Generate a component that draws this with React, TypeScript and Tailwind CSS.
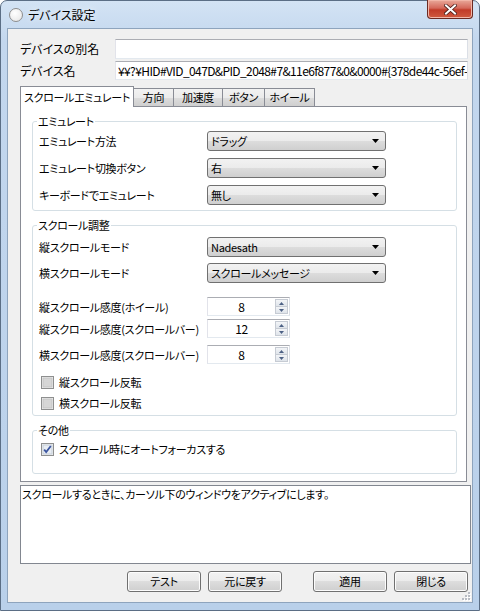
import React from "react";

const jp = "font-['Noto_Sans_CJK_JP','Liberation_Sans',sans-serif] [font-feature-settings:'palt']";

function ComboBox({ value }: { value: string }) {
  return (
    <div className="flex h-[20px] w-[179px] items-center justify-between rounded-[3px] border border-[#707070] bg-[linear-gradient(#f2f2f2,#ebebeb_50%,#dddddd_50%,#cfcfcf)] pl-[3px] pr-[6px] text-[11px] leading-none text-black">
      <span>{value}</span>
      <svg width="7" height="4" viewBox="0 0 7 4">
        <path d="M0 0h7L3.5 4z" fill="#000" />
      </svg>
    </div>
  );
}

function Spinner({ value }: { value: string }) {
  return (
    <div className="flex h-[19px] w-[83px] border border-t-[#abadb3] border-r-[#dbdfe6] border-b-[#e3e9ef] border-l-[#e2e3ea] bg-white">
      <div className="flex flex-1 items-center justify-center text-[12px] leading-none">{value}</div>
      <div className="my-[1px] mr-[1px] flex w-[13px] flex-col">
        <div className="flex flex-1 items-center justify-center border border-[#c6cbd3] bg-[linear-gradient(#f3f5f8,#dfe4ea)]">
          <svg width="5" height="3" viewBox="0 0 5 3">
            <path d="M2.5 0L5 3H0z" fill="#4d6185" />
          </svg>
        </div>
        <div className="flex flex-1 items-center justify-center border border-t-0 border-[#c6cbd3] bg-[linear-gradient(#f3f5f8,#dfe4ea)]">
          <svg width="5" height="3" viewBox="0 0 5 3">
            <path d="M0 0h5L2.5 3z" fill="#4d6185" />
          </svg>
        </div>
      </div>
    </div>
  );
}

function CheckBox({ label, checked }: { label: string; checked?: boolean }) {
  return (
    <div className="flex h-[16px] items-center whitespace-nowrap pl-[8px] text-[11px]">
      <svg width="13" height="13" viewBox="0 0 13 13">
        <rect x="0.5" y="0.5" width="12" height="12" fill="#f4f4f4" stroke="#8e8f8f" />
        <rect x="2" y="2" width="9" height="9" fill={checked ? "#e8edf3" : "#d6d6d6"} stroke={checked ? "#c4cdd8" : "#c4c4c4"} strokeWidth="1" />
        {checked && <path d="M3.2 6.6l2 2.4 4.6-6" fill="none" stroke="#3b55a0" strokeWidth="1.8" />}
      </svg>
      <span className="ml-[5px]">{label}</span>
    </div>
  );
}

function FieldRow({ label, children, className = "" }: { label: string; children: React.ReactNode; className?: string }) {
  return (
    <div className={`flex items-center ${className}`}>
      <span className="w-[174px] shrink-0 whitespace-nowrap pl-[6px] text-[11px] leading-[16px]">{label}</span>
      {children}
    </div>
  );
}

function PushButton({ label }: { label: string }) {
  return (
    <button className="flex h-[21px] w-[74px] items-center justify-center rounded-[3px] border border-[#707070] bg-[linear-gradient(#f2f2f2,#ebebeb_50%,#dddddd_50%,#cfcfcf)] text-[11px] leading-none text-black shadow-[inset_0_0_0_1px_#fcfcfc]">
      {label}
    </button>
  );
}

export default function App() {
  const tabs = [
    { label: "方向", w: "w-[41px]" },
    { label: "加速度", w: "w-[50px]" },
    { label: "ボタン", w: "w-[43px]" },
    { label: "ホイール", w: "w-[51px]" },
  ];

  return (
    <div className={`h-[611px] w-[480px] bg-white text-black tracking-[-0.3px] ${jp}`}>
      <div className="flex h-full flex-col rounded-t-[7px] border border-[#5b6e85] bg-[linear-gradient(#d3e3f4,#c3d7ee_40px,#b9d0ea)] px-[6px] pb-[7px]">
        {/* title bar */}
        <div className="flex h-[27px] items-start">
          <div className="mt-[7px] ml-[2px] h-[14px] w-[14px] rounded-full border border-[#8d8d8d] bg-[radial-gradient(circle_at_40%_35%,#ffffff,#e4e4e4)]" />
          <span className="mt-[6px] ml-[5px] text-[12px] leading-[16px] tracking-normal [text-shadow:0_0_6px_#ffffff]">デバイス設定</span>
          <div className="ml-auto flex h-[19px] w-[46px] -mt-px items-center justify-center rounded-b-[4px] border border-t-0 border-[#6b2a22] bg-[linear-gradient(#e9a99a,#d4685a_45%,#c13b28_55%,#cf5a3f)] shadow-[inset_0_0_0_1px_#f2b6a8]">
            <svg width="13" height="11" viewBox="0 0 13 11">
              <path d="M2 1.5l9 8M11 1.5l-9 8" stroke="#4a1d18" strokeWidth="3.6" strokeLinecap="square" />
              <path d="M2 1.5l9 8M11 1.5l-9 8" stroke="#ffffff" strokeWidth="2" strokeLinecap="square" />
            </svg>
          </div>
        </div>

        {/* client area */}
        <div className="relative flex flex-1 flex-col border border-[#8ea4bd] bg-[#f0f0f0] pl-[12px] pt-[10px]">
          <div className="flex h-[20px] items-center">
            <span className="w-[95px] whitespace-nowrap text-[12px] leading-[16px] tracking-normal">デバイスの別名</span>
            <div className="h-[20px] w-[353px] border border-t-[#abadb3] border-r-[#dbdfe6] border-b-[#e3e9ef] border-l-[#e2e3ea] bg-white" />
          </div>
          <div className="mt-[2px] flex h-[19px] items-center">
            <span className="w-[95px] whitespace-nowrap text-[12px] leading-[16px] tracking-normal">デバイス名</span>
            <div className="flex h-[19px] w-[353px] items-center overflow-hidden whitespace-nowrap border border-t-[#abadb3] border-r-[#dbdfe6] border-b-[#e3e9ef] border-l-[#e2e3ea] bg-white pl-[2px] text-[12px] leading-none tracking-[-0.6px]">
              ¥¥?¥HID#VID_047D&amp;PID_2048#7&amp;11e6f877&amp;0&amp;0000#{"{"}378de44c-56ef-
            </div>
          </div>

          {/* tabs */}
          <div className="relative z-10 mt-[6px] flex h-[20px] items-end">
            <div className="-mb-px flex h-[21px] w-[114px] items-start justify-center whitespace-nowrap border border-b-0 border-[#898c95] bg-white pt-[2px] text-[11px] leading-[16px]">
              スクロールエミュレート
            </div>
            {tabs.map((t) => (
              <div
                key={t.label}
                className={`-ml-px flex h-[18px] ${t.w} items-center justify-center whitespace-nowrap border border-b-0 border-[#898c95] bg-[linear-gradient(#f2f2f2,#ebebeb_50%,#dddddd_50%,#cfcfcf)] text-[11px] leading-none first:ml-0`}
              >
                {t.label}
              </div>
            ))}
          </div>

          {/* tab panel */}
          <div className="flex h-[376px] w-[447px] flex-col border border-[#898c95] bg-white">
            <fieldset className="mt-[6px] ml-[11px] w-[425px] rounded-[3px] border border-[#d5dfe5] pb-[5px]">
              <legend className="ml-[4px] px-[1px] text-[11px] leading-[16px]">エミュレート</legend>
              <FieldRow label="エミュレート方法" className="mt-[2px]">
                <ComboBox value="ドラッグ" />
              </FieldRow>
              <FieldRow label="エミュレート切換ボタン" className="mt-[7px]">
                <ComboBox value="右" />
              </FieldRow>
              <FieldRow label="キーボードでエミュレート" className="mt-[7px]">
                <ComboBox value="無し" />
              </FieldRow>
            </fieldset>

            <fieldset className="mt-[6px] ml-[11px] w-[425px] rounded-[3px] border border-[#d5dfe5] pb-[4px]">
              <legend className="ml-[4px] px-[1px] text-[11px] leading-[16px]">スクロール調整</legend>
              <FieldRow label="縦スクロールモード" className="mt-[4px]">
                <ComboBox value="Nadesath" />
              </FieldRow>
              <FieldRow label="横スクロールモード" className="mt-[6px]">
                <ComboBox value="スクロールメッセージ" />
              </FieldRow>
              <FieldRow label="縦スクロール感度(ホイール)" className="mt-[14px]">
                <Spinner value="8" />
              </FieldRow>
              <FieldRow label="縦スクロール感度(スクロールバー)" className="mt-[3px]">
                <Spinner value="12" />
              </FieldRow>
              <FieldRow label="横スクロール感度(スクロールバー)" className="mt-[7px]">
                <Spinner value="8" />
              </FieldRow>
              <div className="mt-[10px]">
                <CheckBox label="縦スクロール反転" />
              </div>
              <div className="mt-[5px]">
                <CheckBox label="横スクロール反転" />
              </div>
            </fieldset>

            <fieldset className="mt-[6px] ml-[11px] w-[425px] rounded-[3px] border border-[#d5dfe5] pb-[16px]">
              <legend className="ml-[4px] px-[1px] text-[11px] leading-[16px]">その他</legend>
              <div className="mt-[3px]">
                <CheckBox label="スクロール時にオートフォーカスする" checked />
              </div>
            </fieldset>
          </div>

          {/* description */}
          <div className="mt-[3px] h-[79px] w-[451px] border border-[#828790] bg-white pl-[1px] text-[11px] leading-[16px]">
            スクロールするときに、カーソル下のウィンドウをアクティブにします。
          </div>

          {/* buttons */}
          <div className="mt-[7px] flex pl-[107px]">
            <PushButton label="テスト" />
            <div className="ml-[7px]">
              <PushButton label="元に戻す" />
            </div>
            <div className="ml-[31px]">
              <PushButton label="適用" />
            </div>
            <div className="ml-[7px]">
              <PushButton label="閉じる" />
            </div>
          </div>

          {/* size grip */}
          <svg className="absolute right-[1px] bottom-[1px]" width="10" height="10" viewBox="0 0 10 10">
            {[
              [7, 1],
              [4, 4],
              [7, 4],
              [1, 7],
              [4, 7],
              [7, 7],
            ].map(([x, y]) => (
              <g key={`${x}-${y}`}>
                <rect x={x + 1} y={y + 1} width="2" height="2" fill="#ffffff" />
                <rect x={x} y={y} width="2" height="2" fill="#b8bcc4" />
              </g>
            ))}
          </svg>
        </div>
      </div>
    </div>
  );
}
